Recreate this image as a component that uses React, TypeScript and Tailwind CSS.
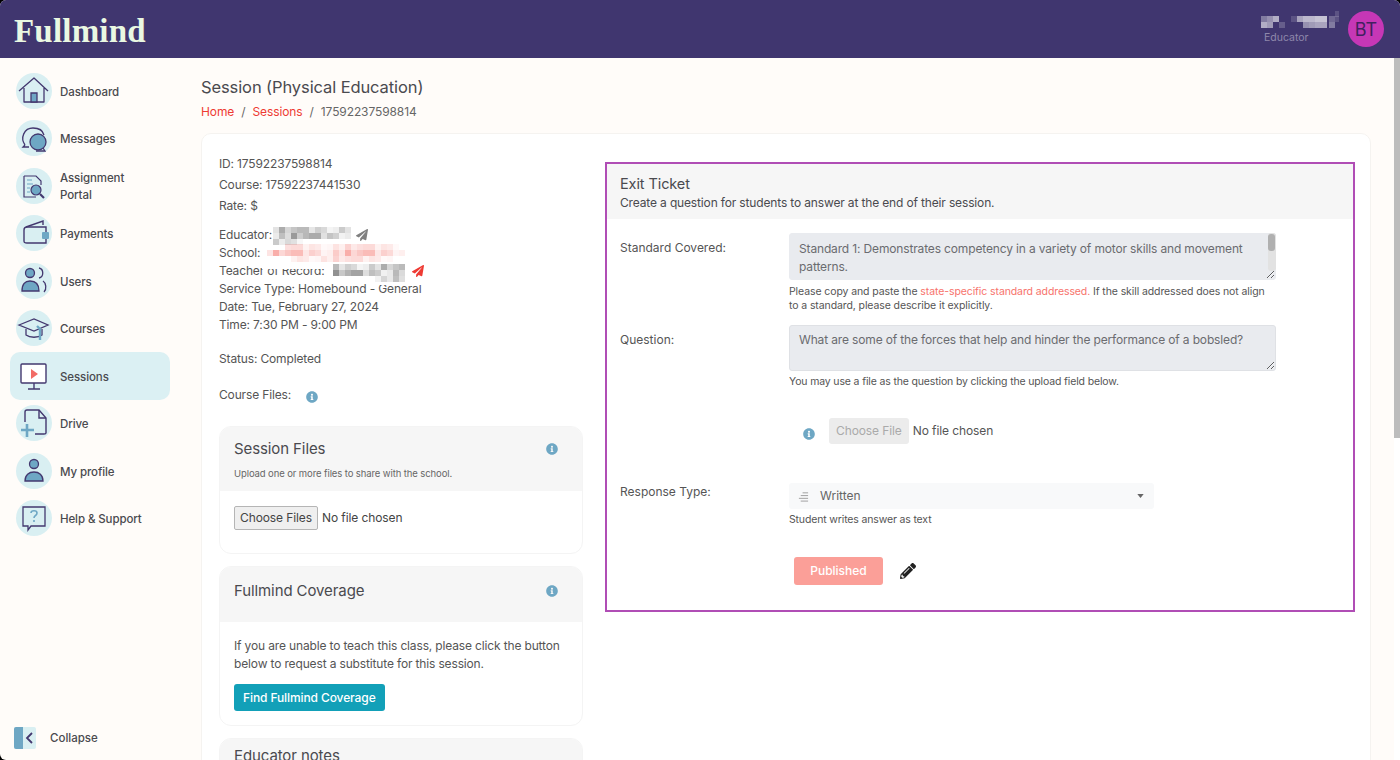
import { ReactNode } from "react";
import { FaInfoCircle, FaPaperPlane, FaPencilAlt } from "react-icons/fa";

const ink = "#43386f";
const blue = "#6ea7c4";

function HomeIcon() {
  return (
    <svg viewBox="0 0 36 36" className="w-9 h-9" fill="none" stroke={ink} strokeWidth="1.3">
      <path d="M3 18 L18 5 L32 18 M8 15 V29 H28 V15" strokeLinejoin="round" />
      <path d="M15 29 V20 H21 V29 Z" fill={blue} />
    </svg>
  );
}

function MessageIcon() {
  return (
    <svg viewBox="0 0 36 36" className="w-9 h-9" fill="none" stroke={ink} strokeWidth="1.3">
      <path d="M9 25 C4 18 8 8 17 8 C23 8 27 11 28 15 M9 25 L7 27 H13" />
      <circle cx="22" cy="22" r="8" fill={blue} />
      <path d="M27 28 L29 31 H20" />
    </svg>
  );
}

function AssignmentIcon() {
  return (
    <svg viewBox="0 0 36 36" className="w-9 h-9" fill="none" stroke={ink} strokeWidth="1.2">
      <path d="M8 8 H20 L25 13 V17 M8 8 V29 H20" />
      <path d="M11 12 H16 M11 16 H17 M11 20 H14 M11 24 H14" stroke={blue} />
      <circle cx="20" cy="22" r="5" fill={blue} />
      <path d="M24 26 L28 30" strokeWidth="2.2" />
    </svg>
  );
}

function WalletIcon() {
  return (
    <svg viewBox="0 0 36 36" className="w-9 h-9" fill="none" stroke={ink} strokeWidth="1.4">
      <path d="M30 17 V12 H11 C9 12 8 13 8 15 V26 C8 28 9 28 11 28 H30 V24" />
      <path d="M10 12 L27 6 V10" />
      <rect x="26" y="17" width="7" height="7" rx="1" fill={blue} stroke="none" />
    </svg>
  );
}

function UsersIcon() {
  return (
    <svg viewBox="0 0 36 36" className="w-9 h-9" fill="none" stroke={ink} strokeWidth="1.3">
      <circle cx="14" cy="10" r="4.5" fill={blue} />
      <path d="M6 28 C6 21 9 18 14 18 C19 18 23 21 23 28 Z" fill={blue} />
      <path d="M23 5 C28 6 28 14 23 15 M27 18 C30 20 31 26 28 29" />
    </svg>
  );
}

function CapIcon() {
  return (
    <svg viewBox="0 0 36 36" className="w-9 h-9" fill="none" stroke={ink} strokeWidth="1.3">
      <path d="M3 15 L18 9 L32 15 L18 21 Z" />
      <path d="M10 19 V25 C14 28 22 28 26 25 V19" />
      <path d="M21 16 L24 19 V30" stroke={blue} strokeWidth="2.4" />
    </svg>
  );
}

function ScreenIcon() {
  return (
    <svg viewBox="0 0 36 36" className="w-9 h-9" fill="none" stroke={ink} strokeWidth="1.4">
      <rect x="5" y="6" width="25" height="19" rx="1" fill="#fff" />
      <path d="M18 25 V31 M12 31 H24" />
      <path d="M15 11 L22 16 L15 21 Z" fill="#f26b66" stroke="none" />
    </svg>
  );
}

function DriveIcon() {
  return (
    <svg viewBox="0 0 36 36" className="w-9 h-9" fill="none" stroke={ink} strokeWidth="1.4">
      <path d="M9 17 V7 C9 6 10 5 11 5 H23 L30 13 V28 C30 29 29 29 28 29 H19" />
      <path d="M23 5 V13 H30" />
      <path d="M5 25 H18 M11 19 V32" stroke={blue} strokeWidth="2.6" />
    </svg>
  );
}

function ProfileIcon() {
  return (
    <svg viewBox="0 0 36 36" className="w-9 h-9" fill={blue} stroke={ink} strokeWidth="1.3">
      <circle cx="18" cy="11" r="4.5" />
      <path d="M9 28 C9 22 13 19 18 19 C23 19 27 22 27 28 Z" />
    </svg>
  );
}

function HelpIcon() {
  return (
    <svg viewBox="0 0 36 36" className="w-9 h-9" fill="none" stroke={ink} strokeWidth="1.3">
      <path d="M7 7 H29 V26 H15 L12 30 V26 H7 Z" />
      <path d="M15 13 C15 10 21 10 21 13 C21 16 18 15 18 18 M18 20 V22" stroke={blue} strokeWidth="1.6" />
    </svg>
  );
}

const navItems: { label: ReactNode; icon: ReactNode; active?: boolean }[] = [
  { label: "Dashboard", icon: <HomeIcon /> },
  { label: "Messages", icon: <MessageIcon /> },
  { label: <>Assignment<br />Portal</>, icon: <AssignmentIcon /> },
  { label: "Payments", icon: <WalletIcon /> },
  { label: "Users", icon: <UsersIcon /> },
  { label: "Courses", icon: <CapIcon /> },
  { label: "Sessions", icon: <ScreenIcon />, active: true },
  { label: "Drive", icon: <DriveIcon /> },
  { label: "My profile", icon: <ProfileIcon /> },
  { label: "Help & Support", icon: <HelpIcon /> },
];

// pixelated blur over names: [x, y, opacity], one cell per block
function Mosaic({ cells, color, size = 6 }: { cells: number[][]; color: string; size?: number }) {
  return (
    <>
      {cells.map(([x, y, o], i) => (
        <rect key={i} x={x} y={y} width={size} height={size} fill={color} opacity={o} />
      ))}
    </>
  );
}

const ops = [0.35, 0.2, 0.5, 0.12, 0.42, 0.28, 0.6, 0.18, 0.38, 0.5, 0.08, 0.3];

function cellRow(y: number, x0: number, x1: number, scale = 1, seed = 0) {
  const cells: number[][] = [];
  for (let x = x0, i = seed; x < x1; x += 6, i += 5) {
    cells.push([x, y, ops[i % ops.length] * scale]);
  }
  return cells;
}

// coordinates are from the top left of the six line block
const educatorCells = [...cellRow(1, 54, 132, 0.9, 1), ...cellRow(7, 54, 132, 1.1, 3), ...cellRow(13, 54, 84, 0.7, 2)];
const schoolCells = [...cellRow(18, 66, 180, 0.5, 4), ...cellRow(24, 48, 184, 0.9, 1), ...cellRow(30, 72, 170, 0.5, 7)];
const teacherCells = [...cellRow(38, 114, 186, 0.9, 2), ...cellRow(44, 114, 186, 1.2, 6), ...cellRow(50, 156, 186, 0.7, 3)];

const headerCells = [
  [74, 0, 0.15],
  [0, 5, 0.35], [6, 5, 0.45], [12, 5, 0.6], [30, 5, 0.15], [36, 5, 0.55], [42, 5, 0.65], [48, 5, 0.65], [54, 5, 0.7], [60, 5, 0.7], [68, 5, 0.25], [74, 5, 0.15],
  [0, 11, 0.6], [6, 11, 0.5], [18, 11, 0.2], [42, 11, 0.45], [48, 11, 0.5], [54, 11, 0.55], [60, 11, 0.55], [68, 11, 0.35],
];

function Row({ label, children, flush }: { label: string; children: ReactNode; flush?: boolean }) {
  return (
    <div className="grid grid-cols-[169px_1fr] pl-[13px]">
      <div className={`text-[12px] leading-[18px] text-[#555] ${flush ? "pt-0" : "pt-[6px]"}`}>{label}</div>
      <div>{children}</div>
    </div>
  );
}

export default function App() {
  return (
    <div className="bg-black w-[1400px] h-[760px] overflow-hidden" style={{ fontFamily: "Inter, 'Open Sans', sans-serif" }}>
      <div className="h-full rounded-[6px] overflow-hidden flex flex-col bg-[#fffcf9]">
        <header className="h-[58px] bg-[#40366f] flex items-center justify-between pl-[14px] pr-[16px] shrink-0">
          <div className="text-[#eaf8e2] text-[33px] font-bold leading-none tracking-[0.2px] pt-[5px]" style={{ fontFamily: "'Liberation Serif', serif" }}>
            Fullmind
          </div>
          <div className="flex items-center gap-[9px]">
            <div className="relative w-[78px] h-[36px]">
              <svg className="absolute left-0 top-0 w-full h-full">
                <Mosaic cells={headerCells} color="#ffffff" />
              </svg>
              <div className="absolute left-[3px] top-[22px] text-[10.5px] leading-none text-[#8f88ab]">Educator</div>
            </div>
            <div className="w-9 h-9 rounded-full bg-[#c637b6] flex items-center justify-center text-[#40205f] text-[18px]">BT</div>
          </div>
        </header>

        <div className="flex flex-1 min-h-0">
          <aside className="w-[180px] shrink-0 flex flex-col pt-[9px] pl-[10px] pb-[11px]">
            {navItems.map((item, i) => (
              <div
                key={i}
                className={`w-[160px] h-[47.5px] pl-[6px] flex items-center gap-[8px] rounded-[10px] text-[11.5px] tracking-[-0.1px] leading-[17px] font-medium text-[#4a4a4f] ${item.active ? "bg-[#dbf0f3]" : ""}`}
              >
                <div className={`w-9 h-9 rounded-full shrink-0 ${item.active ? "" : "bg-[#d9eff2]"}`}>{item.icon}</div>
                <div className="mt-[3px]">{item.label}</div>
              </div>
            ))}
            <div className="mt-auto flex items-center gap-[14px] pl-[4px] text-[11.5px] font-medium text-[#4a4a4f]">
              <div className="w-[22px] h-[22px] rounded-[2px] bg-[#d9eff2] flex overflow-hidden">
                <div className="w-[9px] bg-[#6ea7c4]" />
                <svg viewBox="0 0 13 22" className="w-[13px] h-[22px]" fill="none" stroke={ink} strokeWidth="1.8">
                  <path d="M9 6 L4 11 L9 16" />
                </svg>
              </div>
              <span className="mt-[2px]">Collapse</span>
            </div>
          </aside>

          <main className="flex-1 min-w-0 pl-[21px] pr-[29px] pt-[17px] overflow-hidden">
            <h1 className="text-[16.5px] tracking-[-0.1px] leading-[24px] text-[#4a4a4f]">Session (Physical Education)</h1>
            <div className="mt-[4px] text-[12px] tracking-[-0.1px] leading-[18px] text-[#666] flex gap-[7px]">
              <span className="text-[#ee3a33]">Home</span>
              <span>/</span>
              <span className="text-[#ee3a33]">Sessions</span>
              <span>/</span>
              <span>17592237598814</span>
            </div>

            <div className="mt-[12px] bg-white rounded-[10px] border border-[#f5f3f0] pl-[17px] pr-[15px] pt-[19px] flex gap-[22px] min-h-[700px]">
              <div className="w-[364px] shrink-0 text-[12px] tracking-[-0.15px] text-[#555]">
                <div className="leading-[21px]">
                  <div>ID: 17592237598814</div>
                  <div>Course: 17592237441530</div>
                  <div>Rate: $</div>
                </div>
                <div className="mt-[10px] leading-[18px] relative">
                  <div>Educator:</div>
                  <div>School: <span className="text-[#ee3a33] ml-[128px]">t</span></div>
                  <div>Teacher of Record:</div>
                  <div>Service Type: Homebound - General</div>
                  <div>Date: Tue, February 27, 2024</div>
                  <div>Time: 7:30 PM - 9:00 PM</div>
                  <svg className="absolute left-0 top-0 w-[364px] h-[108px] pointer-events-none">
                    <rect x="43" y="20" width="140" height="20" fill="#fff" />
                    <rect x="43" y="40" width="75" height="3" fill="#fff" />
                    <rect x="148" y="55" width="56" height="4" fill="#fff" />
                    <Mosaic cells={educatorCells} color="#666" />
                    <Mosaic cells={schoolCells} color="#f36a62" />
                    <Mosaic cells={teacherCells} color="#666" />
                  </svg>
                  <FaPaperPlane className="absolute left-[137px] top-[3px] w-[12px] h-[12px] text-[#808080]" />
                  <FaPaperPlane className="absolute left-[193px] top-[39px] w-[12px] h-[12px] text-[#ee3a33]" />
                </div>
                <div className="mt-[16px] leading-[18px]">Status: Completed</div>
                <div className="mt-[18px] leading-[18px] flex items-center gap-[15px]">
                  Course Files:
                  <FaInfoCircle className="w-[12px] h-[12px] mt-[3px]" style={{ color: blue }} />
                </div>

                <div className="mt-[22px] rounded-[12px] border border-[#f4f4f4] overflow-hidden h-[128px]">
                  <div className="bg-[#f6f6f6] h-[64px] px-[14px] pt-[12px] relative">
                    <div className="text-[15px] tracking-[-0.1px] leading-[20px] text-[#4a4a4f]">Session Files</div>
                    <div className="mt-[8px] text-[9.5px] tracking-[-0.1px] leading-[14px] text-[#666]">Upload one or more files to share with the school.</div>
                    <FaInfoCircle className="absolute right-[24px] top-[16px] w-[12px] h-[12px]" style={{ color: blue }} />
                  </div>
                  <div className="px-[14px] pt-[15px]">
                    <input type="file" multiple className="text-[12px] tracking-[-0.1px] text-[#444] file:bg-[#efefef] file:border file:border-[#b5b5b5] file:rounded-[2px] file:px-[5px] file:py-[2px] file:mr-[4px] file:text-[#444]" />
                  </div>
                </div>

                <div className="mt-[12px] rounded-[12px] border border-[#f4f4f4] overflow-hidden h-[160px]">
                  <div className="bg-[#f6f6f6] h-[55px] px-[14px] pt-[14px] relative">
                    <div className="text-[15px] tracking-[-0.1px] leading-[20px] text-[#4a4a4f]">Fullmind Coverage</div>
                    <FaInfoCircle className="absolute right-[24px] top-[18px] w-[12px] h-[12px]" style={{ color: blue }} />
                  </div>
                  <div className="px-[14px] pt-[15px] leading-[18px]">
                    If you are unable to teach this class, please click the button below to request a substitute for this session.
                    <button className="mt-[11px] block h-[27px] px-[9px] rounded-[3px] bg-[#12a0b8] text-white text-[12px] tracking-[-0.1px] font-medium">Find Fullmind Coverage</button>
                  </div>
                </div>

                <div className="mt-[12px] rounded-[12px] border border-[#f4f4f4] overflow-hidden">
                  <div className="bg-[#f6f6f6] h-[55px] px-[14px] pt-[7px] text-[15px] tracking-[-0.1px] leading-[20px] text-[#4a4a4f]">Educator notes</div>
                </div>
              </div>

              <section className="w-[750px] h-[450px] shrink-0 mt-[9px] border-2 border-[#b04db5]">
                <div className="bg-[#f6f6f6] h-[55px] px-[13px] pt-[9px] text-[#4a4a4f]">
                  <div className="text-[14.5px] tracking-[-0.1px] leading-[21px]">Exit Ticket</div>
                  <div className="text-[12px] tracking-[-0.15px] leading-[18px]">Create a question for students to answer at the end of their session.</div>
                </div>

                <div className="pt-[14px]">
                  <Row label="Standard Covered:">
                    <div className="relative w-[487px]">
                      <textarea
                        disabled
                        rows={2}
                        defaultValue="Standard 1: Demonstrates competency in a variety of motor skills and movement patterns."
                        className="block w-full h-[47px] px-[9px] py-[6px] pr-[20px] bg-[#e9ebef] border border-[#e9ebef] rounded-[3px] text-[12px] tracking-[-0.15px] leading-[18px] text-[#6b6b6f] overflow-hidden"
                      />
                      <div className="absolute right-0 top-0 w-[8px] h-[38px] rounded-[3px] bg-[#e2e2e2]" />
                      <div className="absolute right-[1px] top-[1px] w-[7px] h-[17px] rounded-[3px] bg-[#b0b0b0]" />
                    </div>
                    <p className="mt-[5px] text-[10.5px] tracking-[-0.1px] leading-[14px] text-[#555] w-[487px]">
                      Please copy and paste the <span className="text-[#f7736c]">state-specific standard addressed.</span> If the skill addressed does not align<br />to a standard, please describe it explicitly.
                    </p>
                  </Row>
                  <div className="mt-[12px]">
                    <Row label="Question:">
                      <textarea
                        disabled
                        rows={2}
                        defaultValue="What are some of the forces that help and hinder the performance of a bobsled?"
                        className="block w-[487px] h-[46px] px-[9px] py-[5px] bg-[#e9ebef] border border-[#dfe1e5] rounded-[3px] text-[12px] tracking-[-0.15px] leading-[18px] text-[#6b6b6f]"
                      />
                      <p className="mt-[4px] text-[10.5px] tracking-[-0.15px] leading-[14px] text-[#555]">You may use a file as the question by clicking the upload field below.</p>
                      <div className="mt-[29px] flex items-center pl-[14px]">
                        <FaInfoCircle className="w-[12px] h-[12px] mr-[14px] mt-[5px]" style={{ color: blue }} />
                        <input type="file" disabled className="text-[12px] tracking-[-0.1px] text-[#555] file:bg-[#ececec] file:border-0 file:rounded-[3px] file:px-[7px] file:py-[4px] file:mr-[4px] file:text-[#aaa]" />
                      </div>
                    </Row>
                  </div>
                  <div className="mt-[39px]">
                    <Row label="Response Type:" flush>
                      <div className="w-[365px] h-[26px] bg-[#f8f9fa] rounded-[3px] flex items-center pl-[9px] pr-[10px] text-[12px] text-[#666]">
                        <svg viewBox="0 0 12 12" className="w-[11px] h-[11px] mr-[11px]" fill="none" stroke="#999" strokeWidth="1">
                          <path d="M5 2 H11 M3 5 H11 M1 8 H11 M3 11 H11" />
                        </svg>
                        Written
                        <svg viewBox="0 0 8 5" className="ml-auto w-[7px] h-[4px]" fill="#666"><path d="M0 0 H8 L4 5 Z" /></svg>
                      </div>
                      <p className="mt-[4px] text-[10.5px] tracking-[-0.15px] leading-[14px] text-[#555]">Student writes answer as text</p>
                      <div className="mt-[30px] pl-[5px] flex items-center gap-[17px]">
                        <button className="w-[89px] h-[28px] rounded-[3px] bg-[#fb9f98] text-white text-[12px] font-medium">Published</button>
                        <FaPencilAlt className="w-[16px] h-[16px] text-[#222]" />
                      </div>
                    </Row>
                  </div>
                </div>
              </section>
            </div>
          </main>
        </div>
      </div>
      <div className="fixed right-0 top-[58px] w-[6px] h-[702px] bg-white">
        <div className="w-[6px] h-[380px] bg-[#bdbdbd]" />
      </div>
    </div>
  );
}
